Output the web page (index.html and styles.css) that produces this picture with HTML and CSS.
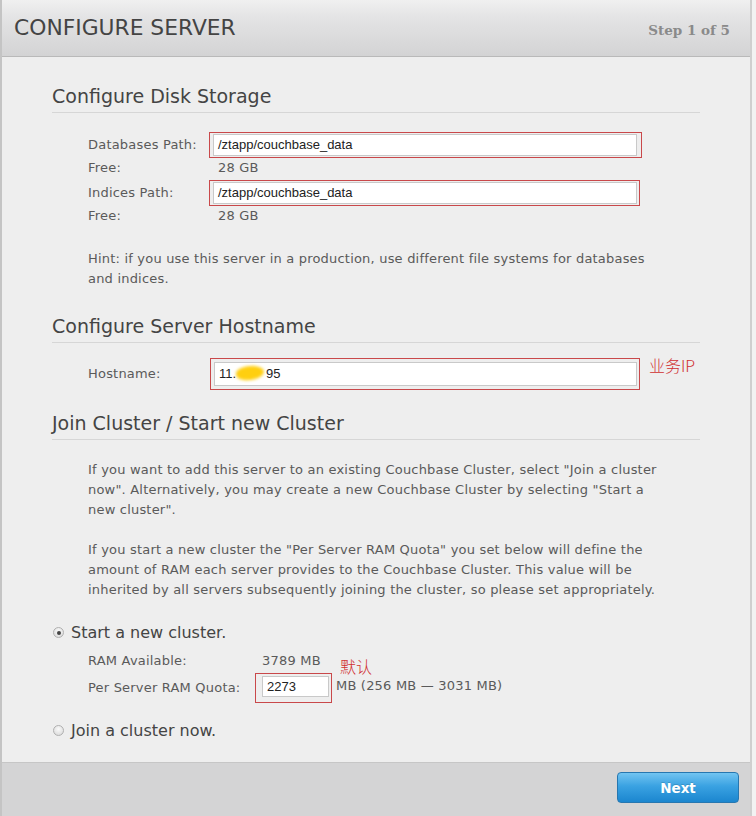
FILE: index.html
```html
<!DOCTYPE html>
<html>
<head>
<meta charset="utf-8">
<link rel="stylesheet" href="styles.css">
</head>
<body>
<div class="wizard">
  <div class="header">
    <h1 class="title">CONFIGURE SERVER</h1>
    <div class="step">Step 1 of 5</div>
  </div>
  <div class="content">
    <h2 class="section-title">Configure Disk Storage</h2>
    <div class="disk-grid">
      <div class="label">Databases Path:</div>
      <div class="mark mark-disk"><div class="field">/ztapp/couchbase_data</div></div>
      <div class="label">Free:</div>
      <div class="value">28 GB</div>
      <div class="label second">Indices Path:</div>
      <div class="mark mark-disk mark-short second"><div class="field">/ztapp/couchbase_data</div></div>
      <div class="label">Free:</div>
      <div class="value">28 GB</div>
    </div>
    <p class="hint">Hint: if you use this server in a production, use different file systems for databases and indices.</p>

    <h2 class="section-title">Configure Server Hostname</h2>
    <div class="host-row">
      <div class="label host-label">Hostname:</div>
      <div class="mark mark-host"><div class="field field-host">11.<span class="blur"></span>95</div></div>
      <div class="note">业务IP</div>
    </div>

    <h2 class="section-title sec3">Join Cluster / Start new Cluster</h2>
    <p class="para">If you want to add this server to an existing Couchbase Cluster, select "Join a cluster now". Alternatively, you may create a new Couchbase Cluster by selecting "Start a new cluster".</p>
    <p class="para para2">If you start a new cluster the "Per Server RAM Quota" you set below will define the amount of RAM each server provides to the Couchbase Cluster. This value will be inherited by all servers subsequently joining the cluster, so please set appropriately.</p>

    <div class="radio-row first-radio"><span class="radio checked"></span><span class="radio-text">Start a new cluster.</span></div>
    <div class="ram-grid">
      <div class="label">RAM Available:</div>
      <div class="value ram-val">3789 MB</div>
      <div class="label quota-label">Per Server RAM Quota:</div>
      <div class="quota-cell">
        <div class="mark mark-quota"><div class="field field-quota">2273</div></div>
        <span class="range">MB (256 MB — 3031 MB)</span>
        <span class="note note-default">默认</span>
      </div>
    </div>
    <div class="radio-row join-radio"><span class="radio"></span><span class="radio-text">Join a cluster now.</span></div>
  </div>
  <div class="footer">
    <button class="next">Next</button>
  </div>
</div>
</body>
</html>
```

FILE: styles.css
```css
html, body {
  margin: 0;
  padding: 0;
  background: #f2f2f2;
}
body {
  width: 756px;
  height: 816px;
  overflow: hidden;
  font-family: "DejaVu Sans", Verdana, sans-serif;
  color: #555;
}
.wizard {
  width: 748px;
  height: 816px;
  border-left: 2px solid #c4c4c4;
  border-right: 2px solid #cfcfcf;
  display: flex;
  flex-direction: column;
  background: #eeeeee;
}
.header {
  height: 57px;
  box-sizing: border-box;
  border-bottom: 1px solid #b9b9b9;
  background: linear-gradient(#f0f0f0, #e4e4e5 30%, #d3d3d4);
  display: flex;
  align-items: center;
  justify-content: space-between;
  padding: 0 20px 0 12px;
  box-shadow: 0 1px 0 #f7f7f7;
}
.title {
  margin: 0;
  font-weight: normal;
  font-size: 21.8px;
  color: #444;
  padding-bottom: 2px;
}
.step {
  font-family: "DejaVu Serif", Georgia, serif;
  font-weight: bold;
  font-size: 13.5px;
  color: #8a8a8a;
  padding-top: 4px;
}
.content {
  flex: 1;
  padding: 27px 50px 0 50px;
  background: #eeeeee;
}
.section-title {
  margin: 0;
  font-weight: normal;
  font-size: 19px;
  line-height: 24px;
  color: #444;
  padding-bottom: 4px;
  border-bottom: 1px solid #d6d6d6;
}
.label, .value, .hint, .para, .range {
  font-size: 13px;
  line-height: 20px;
  color: #5a5a5a;
  letter-spacing: 0.2px;
}
.value {
  padding-left: 9px;
}
.disk-grid {
  margin: 19px 0 0 36px;
  display: grid;
  grid-template-columns: 121px 433px;
  align-items: center;
}
.second {
  margin-top: 2px;
}
.mark {
  border: 1px solid #c9484a;
  box-sizing: border-box;
}
.mark-disk {
  padding: 1px 4px 1px 3px;
  width: 433px;
}
.mark-short {
  width: 431px;
  padding-right: 2px;
}
.field {
  background: #fff;
  border: 1px solid #c9c9c9;
  box-sizing: border-box;
  height: 22px;
  line-height: 20px;
  font-family: "Liberation Sans", Arial, sans-serif;
  font-size: 13px;
  color: #222;
  padding-left: 4px;
}
.hint {
  margin: 23px 0 25px 36px;
  width: 575px;
}
.host-row {
  display: flex;
  align-items: flex-start;
  margin: 15px 0 0 36px;
}
.host-label {
  width: 122px;
  line-height: 32px;
}
.mark-host {
  width: 430px;
  padding: 3px 2px 3px 3px;
}
.field-host {
  height: 24px;
  line-height: 22px;
}
.blur {
  display: inline-block;
  width: 28px;
  height: 14px;
  margin: 0 2px -2px 0;
  border-radius: 45% 55% 50% 50%;
  background: #ffcf10;
  filter: blur(1.5px);
  transform: rotate(-8deg);
}
.note {
  color: #d03030;
  font-family: "Noto Sans CJK SC", sans-serif;
  font-weight: 300;
  font-size: 16px;
  line-height: 18px;
  margin-left: 9px;
  margin-top: -2px;
}
.sec3 {
  margin-top: 21px;
}
.para {
  margin: 20px 0 0 36px;
  width: 575px;
}
.para2 {
  margin-top: 20px;
}
.radio-row {
  display: flex;
  align-items: center;
  height: 20px;
}
.first-radio {
  margin-top: 22px;
}
.join-radio {
  margin-top: 17px;
}
.radio {
  width: 11px;
  height: 11px;
  box-sizing: border-box;
  border-radius: 50%;
  border: 1px solid #b0b0b0;
  background: radial-gradient(circle at 50% 35%, #fafafa, #d6d6d6);
  margin: 1px 7px 0 1px;
  position: relative;
}
.radio.checked::after {
  content: "";
  position: absolute;
  left: 2.5px;
  top: 2.5px;
  width: 4px;
  height: 4px;
  border-radius: 50%;
  background: #444;
}
.radio-text {
  font-size: 16px;
  color: #444;
}
.ram-grid {
  margin: 9px 0 0 36px;
  display: grid;
  grid-template-columns: 167px auto;
  align-items: center;
}
.ram-val {
  padding-left: 7px;
}
.quota-label {
  margin-top: 2px;
}
.quota-cell {
  display: flex;
  align-items: flex-start;
  position: relative;
  margin-top: 2px;
}
.mark-quota {
  width: 77px;
  height: 30px;
  padding: 2px 2px 5px 6px;
}
.field-quota {
  height: 21px;
  line-height: 19px;
}
.range {
  margin-left: 4px;
  margin-top: 3px;
}
.note-default {
  position: absolute;
  left: 85px;
  top: -16px;
  margin: 0;
}
.footer {
  height: 54px;
  box-sizing: border-box;
  border-top: 1px solid #c6c6c6;
  background: #d4d4d5;
  display: flex;
  justify-content: flex-end;
  align-items: flex-start;
  padding: 9px 11px 0 0;
}
.next {
  width: 122px;
  height: 31px;
  border: 1px solid #2777b0;
  border-radius: 4px;
  background: linear-gradient(#72c4f1, #3aa2e2 45%, #1b86cf);
  color: #fff;
  font-family: "DejaVu Sans", Verdana, sans-serif;
  font-weight: bold;
  font-size: 13.5px;
  text-shadow: 0 -1px 0 rgba(0,0,0,0.15);
  padding: 0;
}
```
